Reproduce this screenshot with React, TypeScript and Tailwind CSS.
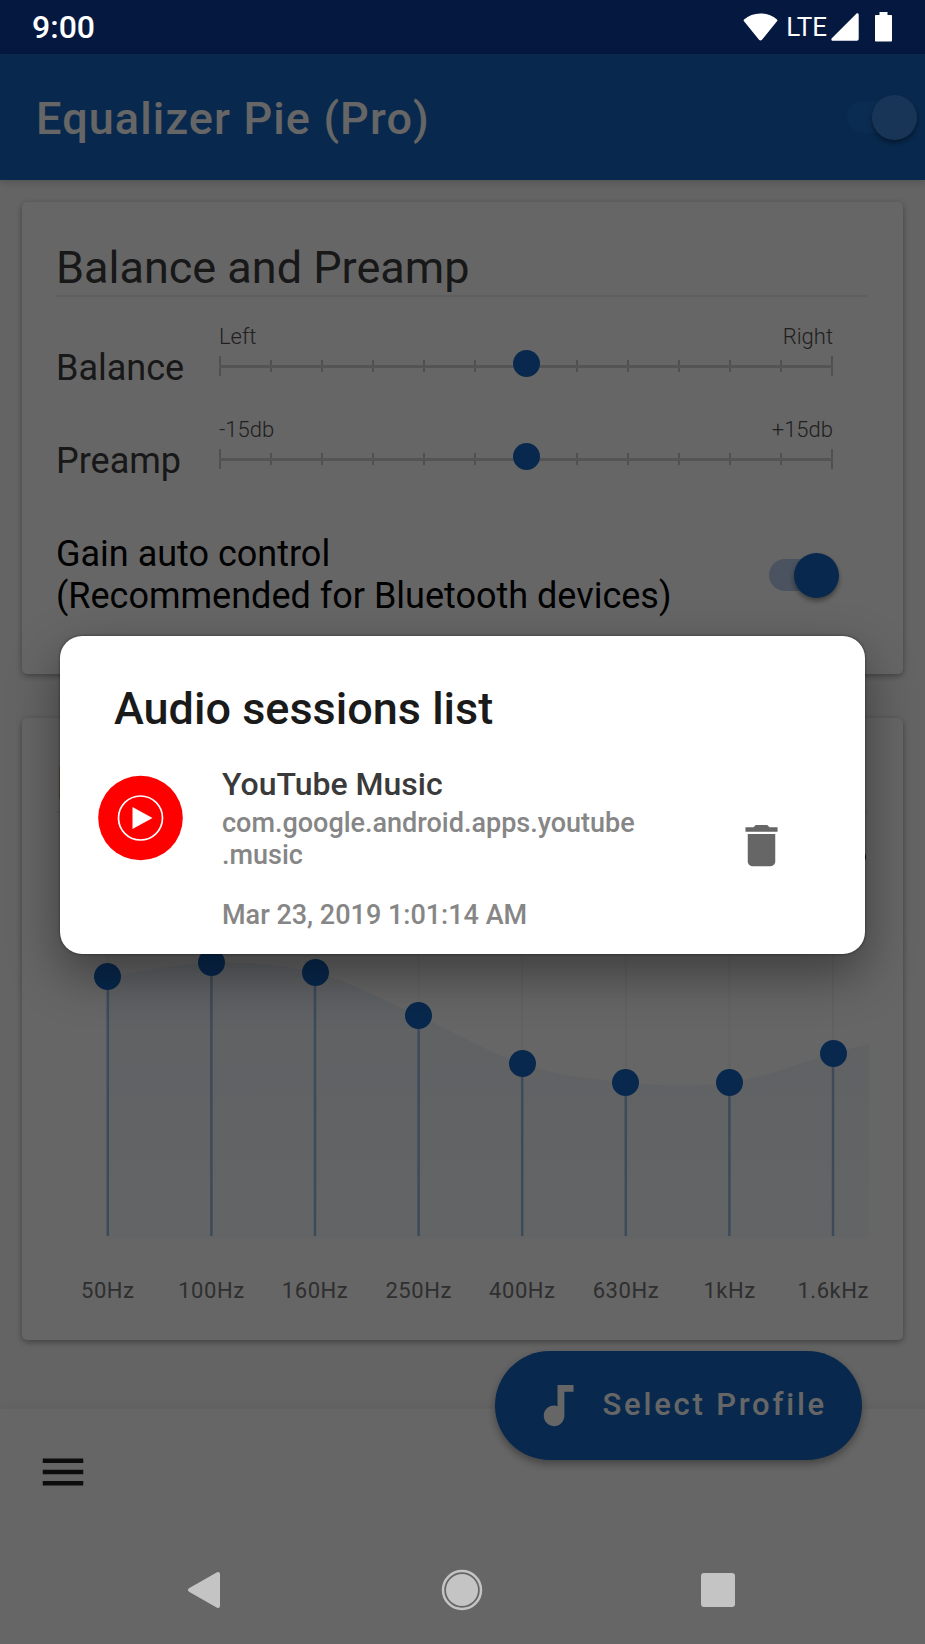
import { useState } from "react"
import { MdAudiotrack, MdDelete, MdMenu } from "react-icons/md"

const CHART_HEIGHT = 350
const THUMB = 27
const COLUMN = 103.6

const bands = [
  { label: "50Hz", level: 80.4 },
  { label: "100Hz", level: 84.8 },
  { label: "160Hz", level: 81.8 },
  { label: "250Hz", level: 68.3 },
  { label: "400Hz", level: 53.5 },
  { label: "630Hz", level: 47.7 },
  { label: "1kHz", level: 47.7 },
  { label: "1.6kHz", level: 56.7 },
]

const levelToY = (level: number) =>
  CHART_HEIGHT - THUMB / 2 - (level / 100) * (CHART_HEIGHT - THUMB)

// smooth curve through the band points, ending at the right edge of the card
const curvePath = (points: number[][]) => {
  let d = `M${points[0][0]} ${points[0][1]}`
  for (let i = 0; i < points.length - 1; i++) {
    const p0 = points[i - 1] || points[i]
    const p1 = points[i]
    const p2 = points[i + 1]
    const p3 = points[i + 2] || p2
    d += ` C${p1[0] + (p2[0] - p0[0]) / 6} ${p1[1] + (p2[1] - p0[1]) / 6} ${p2[0] - (p3[0] - p1[0]) / 6} ${p2[1] - (p3[1] - p1[1]) / 6} ${p2[0]} ${p2[1]}`
  }
  return d
}

const StatusBar = () => {
  return (
    <header className="flex h-[54px] items-center justify-between bg-[#051840] pl-8 pr-[33px] text-white">
      <span className="text-[32px] font-medium leading-[56px]">9:00</span>
      <div className="flex items-center">
        <svg width="35" height="28" viewBox="0 0 35 28" fill="currentColor" className="mr-2">
          <path d="M1 6.5C5.500 2.500 11 .5 17.500 .5S29.500 2.500 34 6.500c.5.6.5 1.200 0 1.800L19 26.800c-.9 1-2.100 1-3 0L1 8.300C.5 7.700.5 7.100 1 6.500z" />
        </svg>
        <span className="text-[26px] leading-[56px]">LTE</span>
        <svg width="28" height="28" viewBox="0 0 28 28" fill="currentColor" className="ml-1">
          <path d="M25.300.8c1-.9 2.400-.4 2.400 1v24c0 1.200-.7 1.900-1.900 1.900h-24C.4 27.700-.1 26.300.8 25.300z" />
        </svg>
        <svg width="17" height="30" viewBox="0 0 17 30" fill="currentColor" className="ml-4">
          <path d="M4.500 0h8v3H16c.6 0 1 .4 1 1v24.500c0 .6-.4 1-1 1H1c-.6 0-1-.4-1-1V4c0-.6.4-1 1-1h3.500z" />
        </svg>
      </div>
    </header>
  )
}

type SwitchProps = { label: string; light?: boolean }

const Switch = ({ label, light }: SwitchProps) => {
  return (
    <label className="relative flex h-[45px] w-[70px] shrink-0 items-center">
      <input
        type="checkbox"
        role="switch"
        defaultChecked
        aria-label={label}
        className={`peer h-8 w-[62px] appearance-none rounded-full ${light ? "bg-[#1c6ecd]" : "bg-[#b9cfee]"}`}
      />
      <span
        className={`absolute right-0 top-0 size-[45px] rounded-full shadow-[0_3px_5px_rgba(0,0,0,0.4)] peer-[:not(:checked)]:right-[25px] ${light ? "bg-[#3e82d9]" : "bg-[#1565c0]"}`}
      />
    </label>
  )
}

type LevelSliderProps = { id: string; name: string; min: string; max: string }

const LevelSlider = ({ id, name, min, max }: LevelSliderProps) => {
  return (
    <div className="grid grid-cols-[163px_1fr] items-end">
      <label htmlFor={id} className="text-4xl leading-[42px] text-[#3c3c3c]">{name}</label>
      <div className="pb-2 pr-[35px]">
        <div className="flex justify-between text-[22px] font-light leading-7 text-[#505050]">
          <span>{min}</span>
          <span>{max}</span>
        </div>
        <div className="relative flex h-[30px] items-center justify-between">
          <div className="absolute inset-x-0 h-[3px] bg-[#d3d3d3]" />
          {Array.from({ length: 13 }, (_, i) => (
            <span key={i} className={`w-[2px] bg-[#c8c8c8] ${i === 0 || i === 12 ? "h-5" : "h-3"}`} />
          ))}
          <input
            id={id}
            type="range"
            defaultValue={50}
            className="absolute -inset-x-3 top-0 h-6 appearance-none bg-transparent [&::-webkit-slider-thumb]:size-[27px] [&::-webkit-slider-thumb]:appearance-none [&::-webkit-slider-thumb]:rounded-full [&::-webkit-slider-thumb]:bg-[#1565c0]"
          />
        </div>
      </div>
    </div>
  )
}

const cardClass = "rounded-[5px] bg-white pl-[34px] pr-[35px] pt-[39px] shadow-[0_2px_6px_rgba(0,0,0,0.35)]"
const cardTitleClass = "border-b-2 border-[#f0f0f0] text-[45px] leading-[54px] text-[#3c3c3c]"

const BalanceCard = () => {
  return (
    <section className={`${cardClass} pb-[57px]`}>
      <h2 className={cardTitleClass}>Balance and Preamp</h2>
      <div className="flex flex-col gap-[27px] pt-[26px]">
        <LevelSlider id="balance" name="Balance" min="Left" max="Right" />
        <LevelSlider id="preamp" name="Preamp" min="-15db" max="+15db" />
      </div>
      <div className="flex items-center justify-between pr-[29px] pt-[51px]">
        <p className="text-4xl leading-[42px] text-black">
          Gain auto control
          <br />
          (Recommended for Bluetooth devices)
        </p>
        <Switch label="Gain auto control" />
      </div>
    </section>
  )
}

const EqualizerCard = () => {
  const [levels, setLevels] = useState(bands.map((band) => band.level))
  const points = levels.map((level, i) => [COLUMN * (i + 0.5), levelToY(level)])
  const curve = curvePath([...points, [813, 144]])

  return (
    <section className={`${cardClass} pb-[35px]`}>
      <h2 className={cardTitleClass}>Equalizer</h2>
      <div className="flex h-[87px] items-center justify-end">
        <button aria-label="Equalizer options" className="flex">
          <svg width="12" height="12" viewBox="0 0 12 12" className="mr-[2px]">
            <circle cx="6" cy="6" r="6" />
          </svg>
        </button>
      </div>
      <div className="relative -mr-[17px]">
        <svg viewBox="0 0 829 350" className="block w-full">
          <defs>
            <linearGradient id="fill" x1="0" y1="0" x2="0" y2="1">
              <stop offset="0" stopColor="#1565c0" stopOpacity="0.08" />
              <stop offset="1" stopColor="#1565c0" stopOpacity="0.03" />
            </linearGradient>
          </defs>
          {points.map(([x]) => (
            <path key={x} d={`M${x} 0V336`} stroke="#f3f5f7" strokeWidth="2" />
          ))}
          <path d={`${curve} V338 H${points[0][0]} Z`} fill="url(#fill)" />
          {points.map(([x, y]) => (
            <path key={x} d={`M${x} ${y}V336`} stroke="#9ab9e0" strokeWidth="2.5" />
          ))}
        </svg>
        <div className="absolute inset-0 grid grid-cols-8 justify-items-center">
          {bands.map((band, i) => (
            <input
              key={band.label}
              id={`band-${i}`}
              type="range"
              step="any"
              value={levels[i]}
              onChange={(e) => setLevels(levels.map((l, j) => (j === i ? Number(e.target.value) : l)))}
              className="h-full w-[27px] appearance-none bg-transparent [direction:rtl] [writing-mode:vertical-lr] [&::-webkit-slider-thumb]:size-[27px] [&::-webkit-slider-thumb]:appearance-none [&::-webkit-slider-thumb]:rounded-full [&::-webkit-slider-thumb]:bg-[#1565c0]"
            />
          ))}
        </div>
      </div>
      <div className="-mr-[17px] grid grid-cols-8 pt-[27px] text-center text-[22px] leading-7 tracking-wide text-[#757575]">
        {bands.map((band, i) => (
          <label key={band.label} htmlFor={`band-${i}`}>{band.label}</label>
        ))}
      </div>
    </section>
  )
}

const BottomBar = () => {
  return (
    <footer className="relative bg-white shadow-[0_-2px_12px_rgba(0,0,0,0.06)]">
      <div className="flex h-[126px] items-center pl-9">
        <button aria-label="Menu" className="text-[#222222]">
          <MdMenu size={54} />
        </button>
      </div>
      <button className="absolute -top-[58px] right-[63px] flex h-[109px] items-center gap-[18px] rounded-full bg-[#1565c0] px-[35px] text-[31px] font-medium tracking-[0.09em] text-white shadow-[0_4px_8px_rgba(0,0,0,0.35)]">
        <MdAudiotrack size={55} />
        Select Profile
      </button>
      <SystemNav />
    </footer>
  )
}

const SystemNav = () => {
  return (
    <nav className="relative z-20 flex h-[109px] items-center justify-center gap-[212px] pr-[2px] text-[#c4c4c4]">
      <button aria-label="Back">
        <svg width="44" height="44" viewBox="0 0 44 44" fill="currentColor" stroke="currentColor" strokeWidth="4" strokeLinejoin="round">
          <path d="M6 22L34 6v32z" />
        </svg>
      </button>
      <button aria-label="Home">
        <svg width="44" height="44" viewBox="0 0 44 44">
          <circle cx="22" cy="22" r="19" fill="none" stroke="currentColor" strokeWidth="2.500" />
          <circle cx="22" cy="22" r="16" fill="currentColor" />
        </svg>
      </button>
      <button aria-label="Recent apps">
        <svg width="44" height="44" viewBox="0 0 44 44" fill="currentColor">
          <rect x="5" y="5" width="34" height="34" rx="3" />
        </svg>
      </button>
    </nav>
  )
}

const SessionsDialog = () => {
  return (
    <div className="absolute inset-x-0 bottom-0 top-[54px] z-10 flex items-center bg-black/60 px-[60px] pb-[108px]">
      <div
        role="dialog"
        aria-labelledby="sessions-title"
        className="w-full rounded-[22px] bg-white pb-[23px] pl-[38px] pr-[76px] pt-[46px] shadow-[0_20px_50px_rgba(0,0,0,0.4),0_0_3px_rgba(0,0,0,0.5)]"
      >
        <h1 id="sessions-title" className="pl-4 text-[45px] font-medium leading-[54px] text-[#1a1a1a]">
          Audio sessions list
        </h1>
        <div className="flex items-start pt-[29px]">
          <svg width="86" height="86" viewBox="0 0 86 86" className="mt-[10px] shrink-0">
            <circle cx="42.500" cy="43" r="42.300" fill="#ff0000" />
            <circle cx="42.500" cy="43" r="22" fill="none" stroke="#fff" strokeWidth="1.700" />
            <path d="M34.500 32v22L54.500 43z" fill="#fff" />
          </svg>
          <div className="min-w-0 flex-1 pl-[38px] text-[27px] font-medium leading-8 text-[#868686]">
            <h2 className="pb-1 text-[32px] leading-[38px] text-[#3a3a3a]">YouTube Music</h2>
            <p>
              com.google.android.apps.youtube
              <br />
              .music
            </p>
            <p className="pt-7">Mar 23, 2019 1:01:14 AM</p>
          </div>
          <button aria-label="Delete session" className="mt-[53px] text-[#666666]">
            <MdDelete size={55} />
          </button>
        </div>
      </div>
    </div>
  )
}

const App = () => {
  return (
    <div className="relative flex min-h-screen flex-col bg-[#fafafa] font-['Roboto',sans-serif]">
      <StatusBar />
      <div className="relative flex h-[126px] items-center justify-between bg-[#1565c0] pl-9 pr-2 shadow-[0_2px_8px_rgba(0,0,0,0.2)]">
        <h1 className="pt-1 text-[45px] font-medium leading-[54px] tracking-wide text-white">Equalizer Pie (Pro)</h1>
        <Switch label="Equalizer enabled" light />
      </div>
      <main className="flex flex-1 flex-col gap-11 px-[22px] pt-[22px]">
        <BalanceCard />
        <EqualizerCard />
      </main>
      <BottomBar />
      <SessionsDialog />
    </div>
  )
}

export default App
